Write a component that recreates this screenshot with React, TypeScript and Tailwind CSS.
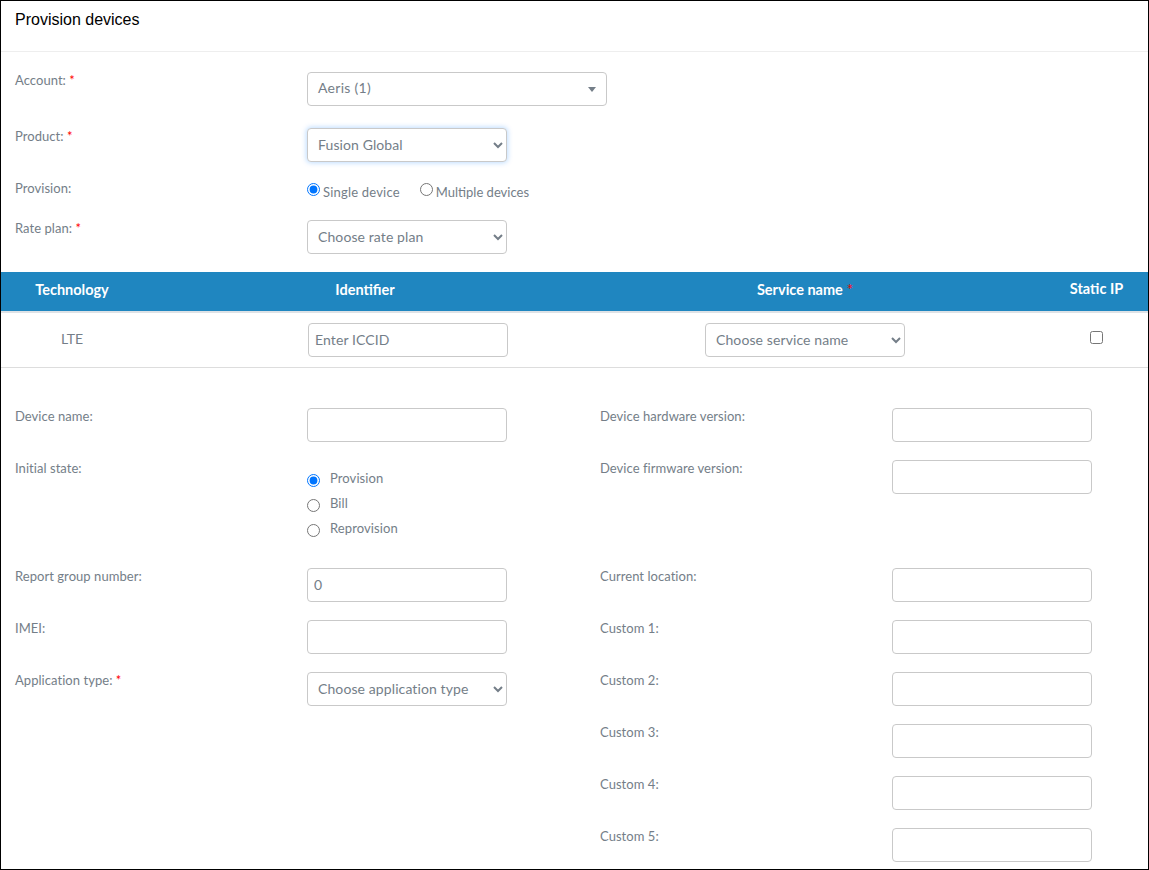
import type { ReactNode } from "react"

const font = "font-['Lato','Noto_Sans',sans-serif]"
const control = "block w-[200px] h-[34px] rounded-[4px] border border-[#c9c9c9] bg-white pb-[2px] text-[14px] tracking-[0.1px] text-[#747e88] outline-none"
const label = "shrink-0 w-[292px] text-[13px] leading-4 tracking-[0.05px] text-[#747e88]"

function Req() {
  return <span className="text-[#f00]"> *</span>
}

function Select({ text, focus }: { text: string; focus?: boolean }) {
  return (
    <select
      defaultValue={text}
      className={`${control} pl-[6px] ${focus ? "border-[#5fadf6] shadow-[0_0_5px_1px_rgba(0,123,255,0.25)]" : ""}`}
    >
      <option>{text}</option>
    </select>
  )
}

function Row({ name, req, children }: { name: string; req?: boolean; children: ReactNode }) {
  return (
    <div className="flex">
      <div className={label}>
        {name}
        {req && <Req />}
      </div>
      {children}
    </div>
  )
}

function TextInput({ value, placeholder }: { value?: string; placeholder?: string }) {
  return <input defaultValue={value} placeholder={placeholder} className={`${control} px-[6px] placeholder:text-[#747e88]`} />
}

function StateRadio({ name, checked }: { name: string; checked?: boolean }) {
  return (
    <label className="flex h-[25px] items-start text-[13px] tracking-[0.09px] text-[#747e88]">
      <input type="radio" name="state" defaultChecked={checked} className="m-0 mt-[4px] h-[13px] w-[13px]" />
      <span className="ml-[10px] leading-4">{name}</span>
    </label>
  )
}

export default function App() {
  return (
    <div className={`h-[870px] overflow-hidden border border-black bg-white ${font}`}>
      <div className="h-[51px] border-b border-[#eeeeee] pl-[14px] pt-[9px] font-['Liberation_Sans',sans-serif] text-[16px] leading-[19px] text-black">
        Provision devices
      </div>

      <div className="flex flex-col pl-[14px] pt-5">
        <Row name="Account:" req>
          <div className="relative flex h-[34px] w-[300px] items-center rounded-[4px] border border-[#c9c9c9] pb-[3px] pl-[10px] text-[14px] tracking-[0.3px] text-[#747e88]">
            Aeris (1)
            <span className="absolute right-[10px] top-[14px] border-x-4 border-t-[5px] border-x-transparent border-t-[#747e88]" />
          </div>
        </Row>
        <div className="mt-[22px]">
          <Row name="Product:" req>
            <Select text="Fusion Global" focus />
          </Row>
        </div>
        <div className="mt-[18px] h-[22px]">
          <Row name="Provision:">
            <div className="flex items-start text-[13px] leading-4 text-[#747e88]">
              <input type="radio" name="mode" defaultChecked className="m-0 mt-[3px] h-[13px] w-[13px]" />
              <span className="ml-[3px] mt-[4px] tracking-[0.2px]">Single device</span>
              <input type="radio" name="mode" className="m-0 ml-[20px] mt-[3px] h-[13px] w-[13px]" />
              <span className="ml-[3px] mt-[4px]">Multiple devices</span>
            </div>
          </Row>
        </div>
        <div className="mt-[18px]">
          <Row name="Rate plan:" req>
            <Select text="Choose rate plan" />
          </Row>
        </div>
      </div>

      <div className="mt-[18px] grid h-[39px] grid-cols-[142px_444px_436px_1fr] items-center bg-[#1f86c0] pb-[4px] text-center text-[14.5px] font-bold text-white">
        <div>Technology</div>
        <div>Identifier</div>
        <div>
          Service name<span className="text-[15px] font-normal text-[#f00]"> *</span>
        </div>
        <div className="-mt-[2px] pl-[22px]">Static IP</div>
      </div>
      <div className="grid h-[57px] grid-cols-[142px_444px_436px_1fr] items-center border-t-2 border-b border-t-[#dee2e6] border-b-[#dddddd] text-center text-[14px] text-[#747e88]">
        <div className="-mt-[3px]">LTE</div>
        <div className="pl-[165px]">
          <TextInput placeholder="Enter ICCID" />
        </div>
        <div className="flex justify-center">
          <Select text="Choose service name" />
        </div>
        <div className="-mt-[5px] flex justify-center pl-[22px]">
          <input type="checkbox" className="m-0 h-[13px] w-[13px]" />
        </div>
      </div>

      <div className="grid grid-cols-[585px_1fr] pl-[14px] pt-10">
        <div className="flex flex-col gap-[18px]">
          <Row name="Device name:">
            <TextInput />
          </Row>
          <Row name="Initial state:">
            <div className="h-[90px] pt-[10px]">
              <StateRadio name="Provision" checked />
              <StateRadio name="Bill" />
              <StateRadio name="Reprovision" />
            </div>
          </Row>
          <Row name="Report group number:">
            <TextInput value="0" />
          </Row>
          <Row name="IMEI:">
            <TextInput />
          </Row>
          <Row name="Application type:" req>
            <Select text="Choose application type" />
          </Row>
        </div>
        <div className="flex flex-col gap-[18px]">
          <Row name="Device hardware version:">
            <TextInput />
          </Row>
          <div className="h-[90px]">
            <Row name="Device firmware version:">
              <TextInput />
            </Row>
          </div>
          {["Current location:", "Custom 1:", "Custom 2:", "Custom 3:", "Custom 4:", "Custom 5:"].map((name) => (
            <Row key={name} name={name}>
              <TextInput />
            </Row>
          ))}
        </div>
      </div>
    </div>
  )
}
